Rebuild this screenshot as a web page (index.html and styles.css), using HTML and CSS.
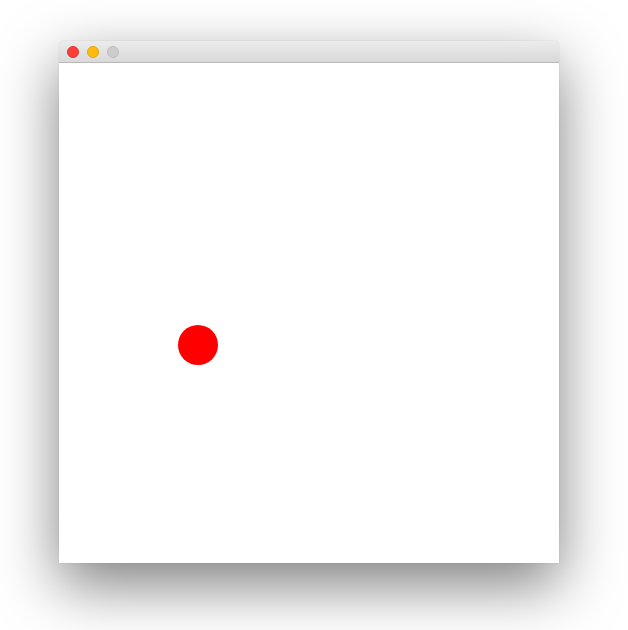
FILE: index.html
```html
<!DOCTYPE html>
<html>
<head>
<meta charset="utf-8">
<link rel="stylesheet" href="styles.css">
</head>
<body>
<div class="window">
  <div class="titlebar">
    <span class="light red"></span>
    <span class="light yellow"></span>
    <span class="light grey"></span>
  </div>
  <div class="canvas">
    <div class="ball"></div>
  </div>
</div>
</body>
</html>
```
FILE: styles.css
```css
html, body {
  margin: 0;
  padding: 0;
  background: #ffffff;
  width: 628px;
  height: 630px;
  overflow: hidden;
}
.window {
  margin: 41px 0 0 59px;
  width: 500px;
  border-radius: 5px 5px 0 0;
  box-shadow: 0 22px 60px rgba(0, 0, 0, 0.5), 0 0 1px rgba(0,0,0,0.3);
  background: #fff;
}
.titlebar {
  height: 22px;
  box-sizing: border-box;
  border-radius: 5px 5px 0 0;
  background: linear-gradient(#ececec, #d9d9d9);
  border-bottom: 1px solid #b8b8b8;
  display: flex;
  align-items: center;
  gap: 8px;
  padding: 0 0 0 8px;
}
.light {
  width: 12px;
  height: 12px;
  border-radius: 50%;
  box-sizing: border-box;
}
.red { background: #fc3d39; border: 1px solid #e0332f; }
.yellow { background: #fdbb10; border: 1px solid #e2a50b; }
.grey { background: #cdcdcd; border: 1px solid #bdbdbd; }
.canvas {
  position: relative;
  height: 500px;
  background: #fff;
}
.ball {
  position: absolute;
  left: 119px;
  top: 262px;
  width: 40px;
  height: 40px;
  border-radius: 50%;
  background: #ff0000;
}
```
